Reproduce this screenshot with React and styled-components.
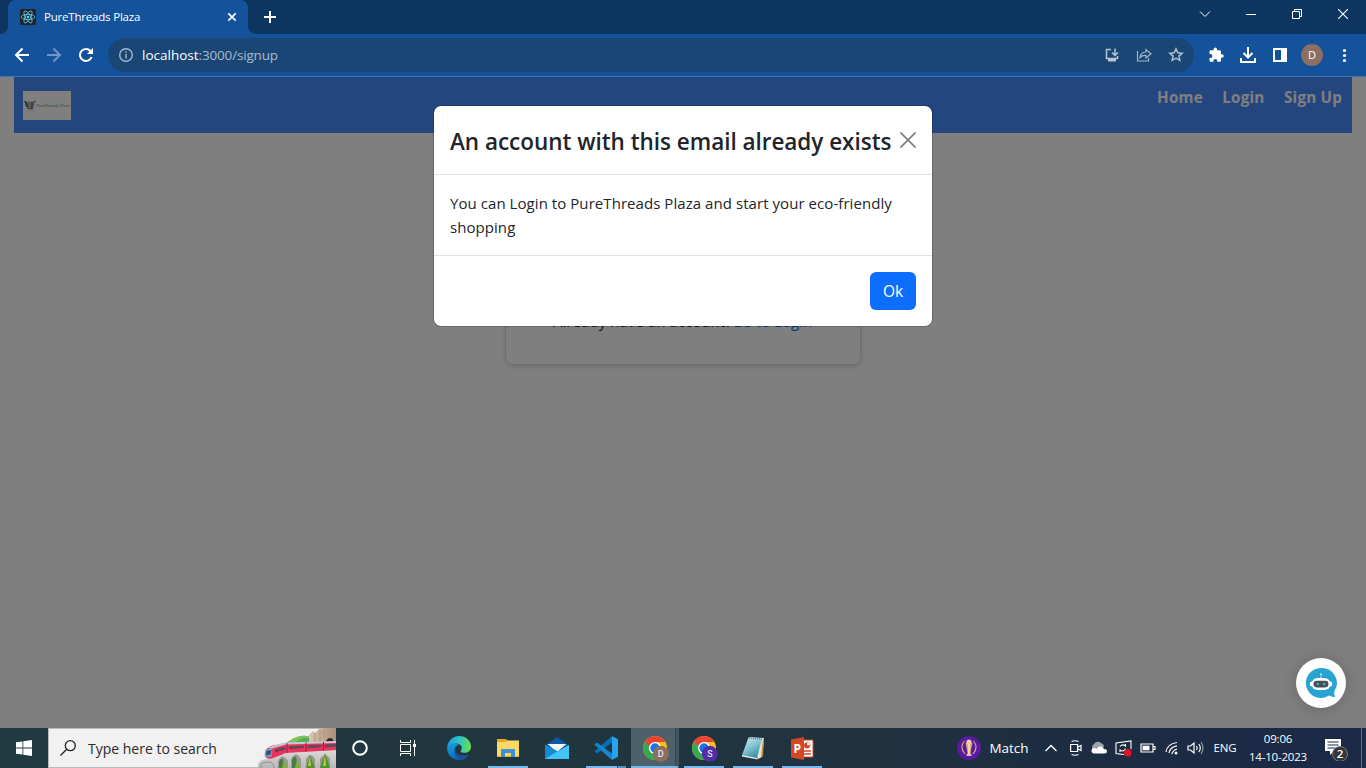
import React from 'react';
import styled, { createGlobalStyle } from 'styled-components';

const Global = createGlobalStyle`
  * { box-sizing: border-box; }
  html, body { margin: 0; padding: 0; }
  body { width: 1366px; height: 768px; overflow: hidden; font-family: "Segoe UI", "Open Sans", "Noto Sans", sans-serif; }
  svg { display: block; flex: none; }
`;

const Screen = styled.div`
  display: flex;
  flex-direction: column;
  width: 1366px;
  height: 768px;
  overflow: hidden;
`;

const Label = styled.span`
  font-size: ${(p) => p.$size}px;
  font-weight: ${(p) => p.$weight || 400};
  letter-spacing: ${(p) => p.$track || 0}px;
  color: ${(p) => p.$color || 'inherit'};
  white-space: nowrap;
  line-height: ${(p) => p.$line || 16}px;
`;

/* Browser chrome */
const TabStrip = styled.div`
  display: flex;
  height: 34px;
  background: #0c3660;
`;
const TabFoot = styled.div`
  width: 8px;
  background: #14529b;
  &::after {
    content: '';
    display: block;
    height: 34px;
    background: #0c3660;
    border-radius: ${(p) => (p.$right ? '0 0 0 8px' : '0 0 8px 0')};
  }
`;
const Tab = styled.div`
  display: flex;
  align-items: center;
  width: 240px;
  padding: 0 10px 0 12px;
  gap: 8px;
  color: #fff;
  background: #14529b;
  border-radius: 8px 8px 0 0;
  ${Label} { flex: 1; }
`;
const NewTab = styled.div`
  display: flex;
  align-items: center;
  margin-left: 6px;
`;
const WindowButtons = styled.div`
  display: flex;
  margin-left: auto;
`;
const WindowButton = styled.div`
  display: flex;
  align-items: center;
  justify-content: center;
  width: 46px;
  height: 28px;
`;
const Toolbar = styled.div`
  display: flex;
  align-items: center;
  height: 43px;
  padding: 0 13px 0 14px;
  background: #14529b;
  border-bottom: 1px solid #4377b2;
`;
const NavButtons = styled.div`
  display: flex;
  gap: 16px;
`;
const AddressBar = styled.div`
  display: flex;
  align-items: center;
  width: 1086px;
  height: 34px;
  margin-left: 14px;
  padding: 0 10px;
  border-radius: 17px;
  background: #194675;
`;
const Url = styled.div`
  flex: 1;
  padding-left: 8px;
  padding-bottom: 3px;
`;
const AddressActions = styled.div`
  display: flex;
  gap: 16px;
`;
const ToolbarActions = styled.div`
  display: flex;
  align-items: center;
  margin-left: 14px;
  gap: 16px;
`;
const ToolAvatar = styled.div`
  display: flex;
  align-items: center;
  justify-content: center;
  width: 22px;
  height: 22px;
  margin: 0 -3px;
  border-radius: 50%;
  background: #8d6e63;
`;

/* Page */
const Page = styled.div`
  position: relative;
  height: 651px;
  padding: 0 14px;
  background: #fff;
  overflow: hidden;
`;
const SiteNav = styled.nav`
  display: flex;
  justify-content: space-between;
  align-items: flex-start;
  height: 56px;
  padding: 10px 10px 0 9px;
  background: #468cfe;
`;
const Logo = styled.div`
  width: 48px;
  height: 29px;
  margin-top: 4px;
  background: #fff;
`;
const Links = styled.div`
  display: flex;
  gap: 19.5px;
  color: #fff;
`;
const SignupCard = styled.div`
  display: flex;
  flex-direction: column;
  justify-content: flex-end;
  width: 356px;
  height: 200px;
  margin: 32px auto 0;
  padding: 0 47px 31px;
  border: 1px solid #dcdcdc;
  border-radius: 8px;
  box-shadow: 0 2px 5px rgba(0, 0, 0, 0.13);
`;
const Backdrop = styled.div`
  position: absolute;
  inset: 0;
  display: flex;
  justify-content: center;
  align-items: flex-start;
  padding-top: 28px;
  background: rgba(0, 0, 0, 0.5);
`;
const Dialog = styled.div`
  width: 500px;
  color: #212529;
  background: #fff;
  background-clip: padding-box;
  border: 1px solid rgba(0, 0, 0, 0.175);
  border-radius: 8px;
`;
const DialogHeader = styled.div`
  display: flex;
  justify-content: space-between;
  align-items: center;
  height: 69px;
  padding: 0 16px;
  border-bottom: 1px solid #dee2e6;
  ${Label} { padding-top: 4px; }
`;
const DialogBody = styled.div`
  display: flex;
  flex-direction: column;
  height: 80px;
  padding: 16px;
`;
const DialogFooter = styled.div`
  display: flex;
  justify-content: flex-end;
  padding: 16px;
  height: 71px;
  border-top: 1px solid #dee2e6;
`;
const OkButton = styled.button`
  width: 46px;
  height: 38px;
  padding: 0;
  border: 0;
  border-radius: 6px;
  font-family: inherit;
  color: #fff;
  background: #0d6efd;
`;
const ChatBubble = styled.div`
  position: absolute;
  right: 20px;
  bottom: 20px;
  display: flex;
  align-items: center;
  justify-content: center;
  width: 50px;
  height: 50px;
  border-radius: 50%;
  background: #fff;
  box-shadow: 0 1px 16px rgba(0, 0, 0, 0.2);
`;

/* Taskbar */
const Taskbar = styled.div`
  display: flex;
  height: 40px;
  color: #fff;
  background: linear-gradient(90deg, #213941 0%, #20363f 45%, #20323f 62%, #1d2d42 78%, #1a2946 100%);
`;
const TaskCell = styled.div`
  display: flex;
  align-items: center;
  justify-content: center;
  width: ${(p) => p.$w}px;
`;
const Search = styled.div`
  display: flex;
  align-items: center;
  width: 288px;
  padding-left: 11px;
  color: #2b2b2b;
  background: #f1f1f1;
  border: 1px solid #bababa;
  border-right: 0;
  ${Label} { margin-left: 12px; padding-top: 2px; }
`;
const SearchArt = styled.div`
  margin: -1px 0 -1px auto;
`;
const AppRow = styled.div`
  display: flex;
  margin-left: 2px;
`;
const AppCell = styled.div`
  display: flex;
  flex-direction: column;
  align-items: center;
  justify-content: space-between;
  width: 49px;
  padding-top: 8px;
  background: ${(p) => (p.$active ? 'linear-gradient(90deg, transparent 1px, #4e616a 1px, #4e616a 45px, #33464f 45px, #33464f 46px, #42545e 46px)' : 'none')};
`;
const Running = styled.div`
  width: ${(p) => (p.$wide ? 47 : 40)}px;
  height: 2px;
  background: ${(p) => (p.$stacked ? 'linear-gradient(90deg, #76b9ed 31px, #315266 31px, #315266 32px, #5a8fb8 32px)' : p.$on ? '#76b9ed' : 'transparent')};
`;
const Tray = styled.div`
  display: flex;
  align-items: center;
  margin-left: auto;
`;
const Clock = styled.div`
  display: flex;
  flex-direction: column;
  align-items: center;
  width: 70px;
`;
const ShowDesktop = styled.div`
  width: 5px;
  height: 40px;
  border-left: 1px solid #66717f;
`;

const Ico = ({ s = 16, w, h, vb, children, stroke = '#fff', sw = 1.5, fill = 'none' }) => (
  <svg width={w || s} height={h || s} viewBox={vb || `0 0 ${w || s} ${h || s}`} fill={fill} stroke={stroke} strokeWidth={sw}>
    {children}
  </svg>
);

const ReactLogo = () => (
  <svg width="16" height="16" viewBox="0 0 16 16">
    <rect width="16" height="16" rx="2" fill="#20232a" />
    <g fill="none" stroke="#61dafb" strokeWidth=".75">
      <ellipse cx="8" cy="8" rx="6.8" ry="2.6" />
      <ellipse cx="8" cy="8" rx="6.8" ry="2.6" transform="rotate(60 8 8)" />
      <ellipse cx="8" cy="8" rx="6.8" ry="2.6" transform="rotate(120 8 8)" />
    </g>
    <circle cx="8" cy="8" r="1.3" fill="#61dafb" />
  </svg>
);

const ShopLogo = () => (
  <svg width="48" height="29" viewBox="0 0 48 29">
    <path d="M1 10.500h1.500l1 5.500" fill="none" stroke="#56606e" />
    <path d="M2 11l2-.5 1.500 6H3.500z" fill="#476a96" />
    <path d="M4.500 10.500h2v6.500H5z" fill="#58bccf" />
    <path d="M6.500 11.500l1.500-1v6.500H6.500z" fill="#e3a96f" />
    <path d="M8 10.500h2L9.500 17H8z" fill="#8e73c0" />
    <path d="M4.500 17.500h5l1.500-7h2" fill="none" stroke="#4a4f58" strokeWidth=".8" />
    <path d="M4 19h7" stroke="#ccc" strokeWidth=".8" />
    <text x="13" y="16" fontFamily="Liberation Serif, serif" fontStyle="italic" fontSize="4.4" fill="#5f9a68">PureThreads Plaza</text>
  </svg>
);

const Robot = () => (
  <svg width="32" height="32" viewBox="0 0 32 32">
    <path d="M16 1a15 15 0 1 0 8 27.6c2 1.2 4 1.5 6.500 1.200-1.300-1.600-1.500-3.500-1-5.800A15 15 0 0 0 16 1z" fill="#27a4d2" />
    <path d="M16 11V9.500" stroke="#fff" strokeWidth=".8" />
    <circle cx="16" cy="7.500" r=".9" fill="#fff" />
    <rect x="4.700" y="14.500" width="22.600" height="5" rx="2.500" fill="#fff" />
    <rect x="6.500" y="11" width="19" height="12" rx="6" fill="#fff" />
    <rect x="8.500" y="13.800" width="15" height="6.600" rx="3.300" fill="#484f56" />
    <circle cx="12.800" cy="17" r="1.200" fill="#3eb6dd" />
    <circle cx="19.200" cy="17" r="1.200" fill="#3eb6dd" />
  </svg>
);

const TrainArt = () => (
  <svg width="78" height="40" viewBox="0 0 78 40">
    <defs>
      <linearGradient id="rock" x1="0" x2="1"><stop offset="0" stopColor="#dcc5ae" /><stop offset="1" stopColor="#a98e7b" /></linearGradient>
      <linearGradient id="stone" x1="0" y1="0" x2="0" y2="1"><stop offset="0" stopColor="#dddbd9" /><stop offset="1" stopColor="#b9b7b6" /></linearGradient>
    </defs>
    <path d="M26 17Q35 8 46 7.500L54 9v9H26z" fill="#7cc15b" />
    <path d="M36 16q6-7 14-6l4 2v5z" fill="#55a95c" />
    <path d="M51 18V7l4-4 2 2 4-4 5-1h12v40H51z" fill="url(#rock)" />
    <path d="M57 5v10M62 2v12M66 1v9" stroke="#b99a82" strokeWidth="1.400" />
    <path d="M68 17v-3q1-4 4-4t4 4v3z" fill="#2d292a" />
    <path d="M0 40v-3q1-6 10-6l15-6 53-3v18z" fill="url(#stone)" />
    <path d="M3 40v-3q1-3 7-3t6 6" fill="none" stroke="#8f8c8a" />
    <path d="M20 40v-7q4-9 10 0v7zM33 40v-9q5-9 10 0v9zM48 40v-9q4-8 9 0v9zM62 40v-9q5-8 10 0v9z" fill="#9b9894" />
    <path d="M21 40v-6q3-7 5 0v6zM34 40v-8q3-7 5 0v8z" fill="#4b7a4a" />
    <path d="M52 27l-4 13h9zM67 25l-5 15h10z" fill="#4f9232" />
    <path d="M26 31l-2 9h5zM39 31l-2 9h5z" fill="#7fae3a" />
    <path d="M52 28l-2 10h3zM67 26l-2 12h3z" fill="#b9ca3a" />
    <path d="M7 27q0-7 6-9l14-3 51-1.500V22l-50 3-14 5.500q-7 1-7-3.500z" fill="#e8345c" />
    <path d="M10 19.500l17-5 51-1.500v2l-50 1.500-16 4.500z" fill="#c4ccd3" />
    <path d="M7.500 21.500l7-1.500-1 8.500-6.500 1q-.7-4 .5-8z" fill="#7c9cbb" />
    <path d="M8.500 23l5-1-1 4.500-4.500 1z" fill="#2d5279" />
    <path d="M17 21.500l10-2.800v2.700l-10 3.100zM31 18.200l15-.7v2.500l-15 1.200zM49.500 17.300l14-.6v2.500l-14 1zM67 16.500l11-.5v2.700l-11 .8z" fill="#6a4358" />
    <path d="M29 15v10M48 14.500v9.500M65.500 14v8.500" stroke="#8c2445" />
  </svg>
);

const Edge = () => (
  <svg width="24" height="24" viewBox="0 0 24 24">
    <defs>
      <linearGradient id="eg" x1="0" y1=".3" x2="1" y2=".4"><stop offset="0" stopColor="#1a9be0" /><stop offset=".5" stopColor="#2fc2cb" /><stop offset="1" stopColor="#67e04c" /></linearGradient>
      <linearGradient id="eb" x1="0" y1="0" x2=".5" y2="1"><stop offset="0" stopColor="#1aa0e0" /><stop offset="1" stopColor="#0a66bd" /></linearGradient>
    </defs>
    <path d="M.3 12C.3 5 5.500 0 12 0c7 0 12 5 12 10.500 0 4-3 6.300-6.500 6.300-3 0-4.500-1-3.500-2.300 2.500-3.500-1-7.500-5.500-7C4.500 8 1.500 10 .3 12z" fill="url(#eg)" />
    <path d="M.2 12C1 8.700 4.500 7 8.300 7.500c2.600.3 3.900 1.800 3.900 1.800C8 9 6.500 14 9 17c3 4 9.500 5 13 1-2 4-6 6-10 6C5.500 24-.3 19 .2 12z" fill="url(#eb)" />
    <path d="M8.200 12c-1 5.500 5 10 13.600 6-2 3.500-5.500 5.500-8.500 5.900C8 22 6 16 8.200 12z" fill="#15539b" />
  </svg>
);
const Explorer = () => (
  <svg width="24" height="24" viewBox="0 0 24 24">
    <path d="M1 3h9l2 2h11v16H1z" fill="#e9a820" />
    <path d="M1 6h9l1.500-1.500H23V21H1z" fill="#ffd765" />
    <path d="M5 21v-7q0-1 1-1h12q1 0 1 1v7h-4v-4H9v4z" fill="#3f8fd4" />
    <path d="M1 20h4v1H1zM19 20h4v1h-4zM9 20h6v1H9z" fill="#e8b23a" />
  </svg>
);
const Mail = () => (
  <svg width="24" height="24" viewBox="0 0 24 24">
    <path d="M0 9.500L12 1l12 8.500L12 18z" fill="#0c59a4" />
    <path d="M2.500 8h19L12 16z" fill="#f5f5f5" />
    <path d="M0 9l13 6.500L24 9v14H0z" fill="#27a7e8" />
    <path d="M0 23L24 9v14z" fill="#45c5f6" />
    <path d="M0 9l12 6L0 23z" fill="#1788d4" />
  </svg>
);
const VsCode = () => (
  <svg width="24" height="24" viewBox="0 0 24 24">
    <path d="M.5 15.200L2.300 17q.7.500 1.400 0L18 6.500V0z" fill="#0b6fb5" />
    <path d="M.5 8.800L2.300 7q.7-.5 1.400 0L18 17.500V24z" fill="#1687cf" />
    <path d="M17.500 0L23 2.500q1 .5 1 1.500v16q0 1-1 1.500L17.500 24q.5-.5.5-1.500v-21q0-1-.5-1.500z" fill="#29a2f0" />
  </svg>
);
const ChromeSvg = styled.svg`
  overflow: visible;
`;
const Chrome = ({ letter, color }) => (
  <ChromeSvg width="24" height="24" viewBox="0 0 24 24">
    <circle cx="12" cy="12" r="12" fill="#fbc116" />
    <path d="M1.600 6A12 12 0 0 0 12 24l5.200-9A6 6 0 0 1 6.800 15z" fill="#34a853" />
    <path d="M1.600 6l5.200 9L12 12V6z" fill="#34a853" />
    <path d="M1.600 6A12 12 0 0 1 22.400 6H12a6 6 0 0 0-5.600 4z" fill="#ea4335" />
    <circle cx="12" cy="12" r="6" fill="#fff" />
    <circle cx="12" cy="12" r="4.700" fill="#1a73e8" />
    <circle cx="17.800" cy="17.800" r="8" fill={color} />
    <text x="17.800" y="21" textAnchor="middle" fontFamily="Roboto, sans-serif" fontSize="9" fill="#fff">{letter}</text>
  </ChromeSvg>
);
const Notepad = () => (
  <svg width="24" height="24" viewBox="0 0 24 24">
    <defs><linearGradient id="np" x1="0" y1="0" x2=".6" y2="1"><stop offset="0" stopColor="#cdeaf0" /><stop offset=".5" stopColor="#8bc8d4" /><stop offset="1" stopColor="#348ea5" /></linearGradient></defs>
    <path d="M8 1l15 1-2 19-4 2z" fill="#e8e1d2" />
    <path d="M22 3l-2 18 2-1 1-16z" fill="#bd8f4b" />
    <path d="M7.500 1.500L21 2.500 16 22 1 19z" fill="url(#np)" />
    <path d="M1 19l15 3 1 1.500L1 20.500z" fill="#eef3f3" />
    <path d="M8 2l13 1" stroke="#697d83" strokeWidth="1.500" strokeDasharray="1 1" />
  </svg>
);
const PowerPoint = () => (
  <svg width="24" height="24" viewBox="0 0 24 24">
    <path d="M12 4h11v17H12z" fill="#fff" stroke="#d24726" />
    <circle cx="17" cy="9.500" r="3" fill="#d24726" />
    <path d="M17 9.500V6a3.500 3.500 0 0 1 3.500 3.500z" fill="#fff" stroke="#d24726" strokeWidth=".5" />
    <path d="M14 15h7M14 18h7" stroke="#d24726" strokeWidth="1.400" />
    <path d="M1 3.500L14 1v23L1 21.500z" fill="#d24726" />
    <text x="7.300" y="17" textAnchor="middle" fontFamily="Open Sans, sans-serif" fontWeight="700" fontSize="12" fill="#fff">P</text>
  </svg>
);
const Trophy = () => (
  <svg width="24" height="24" viewBox="0 0 24 24">
    <circle cx="12" cy="12" r="12" fill="#5a1ba2" />
    <path d="M7.500 5q-5.500 6 .5 13M16.500 5q5.500 6-.5 13" fill="none" stroke="#d9a978" strokeWidth="1.100" />
    <path d="M8.500 7h7l-1.500 7-.5 4h-3l-.5-4z" fill="#dba869" />
    <circle cx="12" cy="6" r="2.600" fill="#efcda0" />
    <path d="M12 8v10M9.500 19h5" stroke="#fff0bd" strokeWidth="1.300" />
  </svg>
);

const apps = [
  { id: 'edge', icon: <Edge /> },
  { id: 'files', icon: <Explorer />, on: true },
  { id: 'mail', icon: <Mail /> },
  { id: 'code', icon: <VsCode />, on: true, stacked: true },
  { id: 'chrome-d', icon: <Chrome letter="D" color="#8d6e63" />, on: true, active: true },
  { id: 'chrome-s', icon: <Chrome letter="S" color="#512da8" />, on: true },
  { id: 'notepad', icon: <Notepad />, on: true },
  { id: 'powerpoint', icon: <PowerPoint />, on: true },
];

export default function App() {
  return (
    <Screen>
      <Global />
      <TabStrip>
        <TabFoot />
        <Tab>
          <ReactLogo />
          <Label $size={11.5} $track={-0.2}>PureThreads Plaza</Label>
          <Ico s={12} vb="-1 -1 12 12" sw={1.7}><path d="M1.300 1.300l7.400 7.400M8.700 1.300L1.300 8.700" /></Ico>
        </Tab>
        <TabFoot $right />
        <NewTab><Ico s={16} sw={2}><path d="M8 2v12M2 8h12" /></Ico></NewTab>
        <WindowButtons>
          <WindowButton><Ico w={12} h={12} sw={1}><path d="M1 3.500l5 5 5-5" /></Ico></WindowButton>
          <WindowButton><Ico w={10} h={10} sw={1}><path d="M0 5.500h10" /></Ico></WindowButton>
          <WindowButton><Ico w={10} h={10} sw={1}><path d="M.5 2.500h7v7h-7zM2.500 2.500v-2h7v7h-2" /></Ico></WindowButton>
          <WindowButton><Ico w={10} h={10} sw={1.1}><path d="M0 0l10 10M10 0L0 10" /></Ico></WindowButton>
        </WindowButtons>
      </TabStrip>
      <Toolbar>
        <NavButtons>
          <Ico s={16} sw={2}><path d="M15 8H2M8.500 1.500L2 8l6.500 6.500" /></Ico>
          <Ico s={16} sw={2} stroke="#6f97c6"><path d="M1 8h13M7.500 1.500L14 8l-6.500 6.500" /></Ico>
          <Ico s={16} sw={2}><path d="M13.600 10A6 6 0 1 1 12.500 4L14 5.500" /><path d="M15 1v6H9z" fill="#fff" stroke="none" /></Ico>
        </NavButtons>
        <AddressBar>
          <Ico s={16} stroke="#a9b9ca" sw={1.4}><circle cx="8" cy="8" r="6.300" /><path d="M8 7v4.500M8 4.300v1.500" /></Ico>
          <Url><Label $size={13.5} $track={0} $color="#fff">localhost</Label><Label $size={13.5} $track={-0.17} $color="#a9b9cc">:3000/signup</Label></Url>
          <AddressActions>
            <Ico s={16} stroke="#b9c4cf" sw={1.5}><path d="M7 2.500H2.500v9h11V9M11 1.500V8M8 5.500l3 3 3-3" /><path d="M4 12h8v2.500H4z" fill="#b9c4cf" stroke="none" /></Ico>
            <Ico s={16} stroke="#a4b4c5" sw={1.2}><path d="M1.500 4v10h11v-3M10 2.500V5Q5 5 4 10.500 6.500 8 10 8.500V11l5-4.300z" /></Ico>
            <Ico s={16} stroke="#b9c4cf" sw={1.4}><path d="M8 1.800l1.800 4 4.400.4-3.300 2.900 1 4.300L8 11.200l-3.900 2.200 1-4.300L1.800 6.200l4.400-.4z" /></Ico>
          </AddressActions>
        </AddressBar>
        <ToolbarActions>
          <Ico s={16} fill="#fff" stroke="none"><path d="M14 7.300h-1V4.500c0-.7-.6-1.300-1.300-1.300H9v-1a1.700 1.700 0 0 0-3.400 0v1H2.800c-.7 0-1.300.6-1.300 1.300v2.600h1a1.900 1.900 0 0 1 0 3.800h-1v2.600c0 .7.6 1.300 1.300 1.300h2.600v-1a1.900 1.900 0 0 1 3.800 0v1h2.500c.7 0 1.300-.6 1.300-1.300v-2.800h1a1.700 1.700 0 0 0 0-3.400z" /></Ico>
          <Ico s={16} sw={2}><path d="M8 0v10M3.500 6L8 10.500 12.500 6M1 11v4h14v-4" /></Ico>
          <Ico s={16} sw={2}><path d="M2 2h12v12H2z" /><path d="M9 2h5v12H9z" fill="#fff" stroke="none" /></Ico>
          <ToolAvatar><Label $size={11} $color="#fff">D</Label></ToolAvatar>
          <Ico s={16} fill="#fff" stroke="none"><circle cx="8.500" cy="3.500" r="1.600" /><circle cx="8.500" cy="8.500" r="1.600" /><circle cx="8.500" cy="13.500" r="1.600" /></Ico>
        </ToolbarActions>
      </Toolbar>
      <Page>
        <SiteNav>
          <Logo><ShopLogo /></Logo>
          <Links>
            <Label $size={15.2} $weight={700} $track={0.2} $line={21}>Home</Label>
            <Label $size={15.2} $weight={700} $track={0.2} $line={21}>Login</Label>
            <Label $size={15.2} $weight={700} $track={0.2} $line={21}>Sign Up</Label>
          </Links>
        </SiteNav>
        <SignupCard>
          <div><Label $size={15} $track={0.05} $line={24} $color="#212529">Already have an account?</Label><Label $size={15} $track={0.05} $line={24} $color="#0d6efd">Go to Login</Label></div>
        </SignupCard>
        <Backdrop>
          <Dialog>
            <DialogHeader>
              <Label $size={22.5} $weight={600} $track={-0.03} $line={36}>An account with this email already exists</Label>
              <Ico s={16} stroke="#7f7f7f" sw={1.8}><path d="M.5 .5l15 15M15.500 .5l-15 15" /></Ico>
            </DialogHeader>
            <DialogBody>
              <Label $size={15} $track={0.06} $line={24}>You can Login to PureThreads Plaza and start your eco-friendly</Label>
              <Label $size={15} $track={0.06} $line={24}>shopping</Label>
            </DialogBody>
            <DialogFooter><OkButton><Label $size={15.5} $line={24}>Ok</Label></OkButton></DialogFooter>
          </Dialog>
        </Backdrop>
        <ChatBubble><Robot /></ChatBubble>
      </Page>
      <Taskbar>
        <TaskCell $w={48}><Ico s={16} fill="#fff" stroke="none"><path d="M0 2.300L6.500 1.400v6.200H0zM7.300 1.300L16 0v7.600H7.300zM0 8.400h6.500v6.200L0 13.700zM7.300 8.400H16V16l-8.700-1.200z" /></Ico></TaskCell>
        <Search>
          <Ico s={16} stroke="#222" sw={1.3}><circle cx="10.300" cy="5.700" r="5" /><path d="M6.700 9.300L.5 15.500" /></Ico>
          <Label $size={14} $line={20}>Type here to search</Label>
          <SearchArt><TrainArt /></SearchArt>
        </Search>
        <TaskCell $w={48}><Ico s={16} sw={2}><circle cx="8" cy="8" r="6.800" /></Ico></TaskCell>
        <TaskCell $w={48}><Ico w={16} h={16} sw={1}><path d="M.5 0v2.500h10V0M.5 16v-2.500h10V16M.5 4.500h10v7H.5zM14.500 0v16" /><path d="M13 4h3v3h-3z" fill="#fff" stroke="none" /></Ico></TaskCell>
        <AppRow>
          {apps.map((a) => (
            <AppCell key={a.id} $active={a.active}>
              {a.icon}
              <Running $on={a.on} $wide={a.active} $stacked={a.stacked} />
            </AppCell>
          ))}
        </AppRow>
        <Tray>
          <Trophy />
          <TaskCell $w={56}><Label $size={13.5}>Match</Label></TaskCell>
          <TaskCell $w={28}><Ico w={14} h={8} sw={1.3}><path d="M1.500 7L7 1.500 12.500 7" /></Ico></TaskCell>
          <TaskCell $w={21}><Ico w={12} h={16} sw={1.2}><path d="M.6 4.500h7v7h-7zM8 7l3-1.500v5L8 9M1.500 1.500Q5 0 8.500 1.500M1.500 14.500Q5 16 8.500 14.500" /></Ico></TaskCell>
          <TaskCell $w={26}><Ico w={18} h={14} fill="#fff" stroke="none"><path d="M3 9a4 4 0 0 1 1-6 4.500 4.500 0 0 1 7-1q3 1 3 4z" fill="#9ca3ab" /><path d="M3.500 12.500a2.800 2.800 0 0 1 .5-5.500q2 0 3 .8Q8.500 5 11 5.500q2.500.5 3 2.500 3 0 3 2.300 0 2.200-2.500 2.200z" /></Ico></TaskCell>
          <TaskCell $w={23}><Ico w={17} h={17} sw={1.1}><path d="M9 14.500L1 13.500V3L16 1v8M5 6.500q2.500-3 5.500-.5V4M10.500 8.500q-2 4-5.500 1.500v2" /><circle cx="12.800" cy="12.800" r="3.700" fill="#e81123" stroke="none" /></Ico></TaskCell>
          <TaskCell $w={26}><Ico w={16} h={10} sw={1.2}><path d="M1 1h12v8H1zM13 3.500h2v3h-2" /><path d="M2.500 2.700h7v4.600h-7z" fill="#fff" stroke="none" /></Ico></TaskCell>
          <TaskCell $w={22}><Ico w={14} h={14} sw={1.2}><path d="M1 11Q2 3 12 1.500M4 12Q5 6 12 4.800M6.800 13Q8 9 12 8" /><circle cx="11" cy="12" r="1.500" fill="#fff" stroke="none" /></Ico></TaskCell>
          <TaskCell $w={24}><Ico w={17} h={14} sw={1.2}><path d="M1 5h2.500L7 2v10L3.500 9H1zM9.500 5q1.500 2 0 4M11.800 3q3 4 0 8" /><path d="M14 1q4 6 0 12" stroke="#8d98a4" /></Ico></TaskCell>
          <TaskCell $w={36}><Label $size={11.5} $track={-0.1}>ENG</Label></TaskCell>
          <Clock><Label $size={11.5} $track={-0.2} $line={18}>09:06</Label><Label $size={11.5} $track={-0.2} $line={18}>14-10-2023</Label></Clock>
          <TaskCell $w={48}>
            <Ico w={26} h={26}><path d="M1 4h16v12h-7l-4 4v-4H1z" fill="#fff" stroke="none" /><path d="M3.500 7h11M3.500 10h11M3.500 13h8" stroke="#1b2a46" strokeWidth="1.2" /><circle cx="16" cy="19" r="7.500" fill="#35363a" stroke="#777c84" strokeWidth="1" /><text x="16" y="23" textAnchor="middle" fontFamily="Open Sans, sans-serif" fontSize="11.500" fontWeight="600" fill="#fff" stroke="none">2</text></Ico>
          </TaskCell>
          <ShowDesktop />
        </Tray>
      </Taskbar>
    </Screen>
  );
}
